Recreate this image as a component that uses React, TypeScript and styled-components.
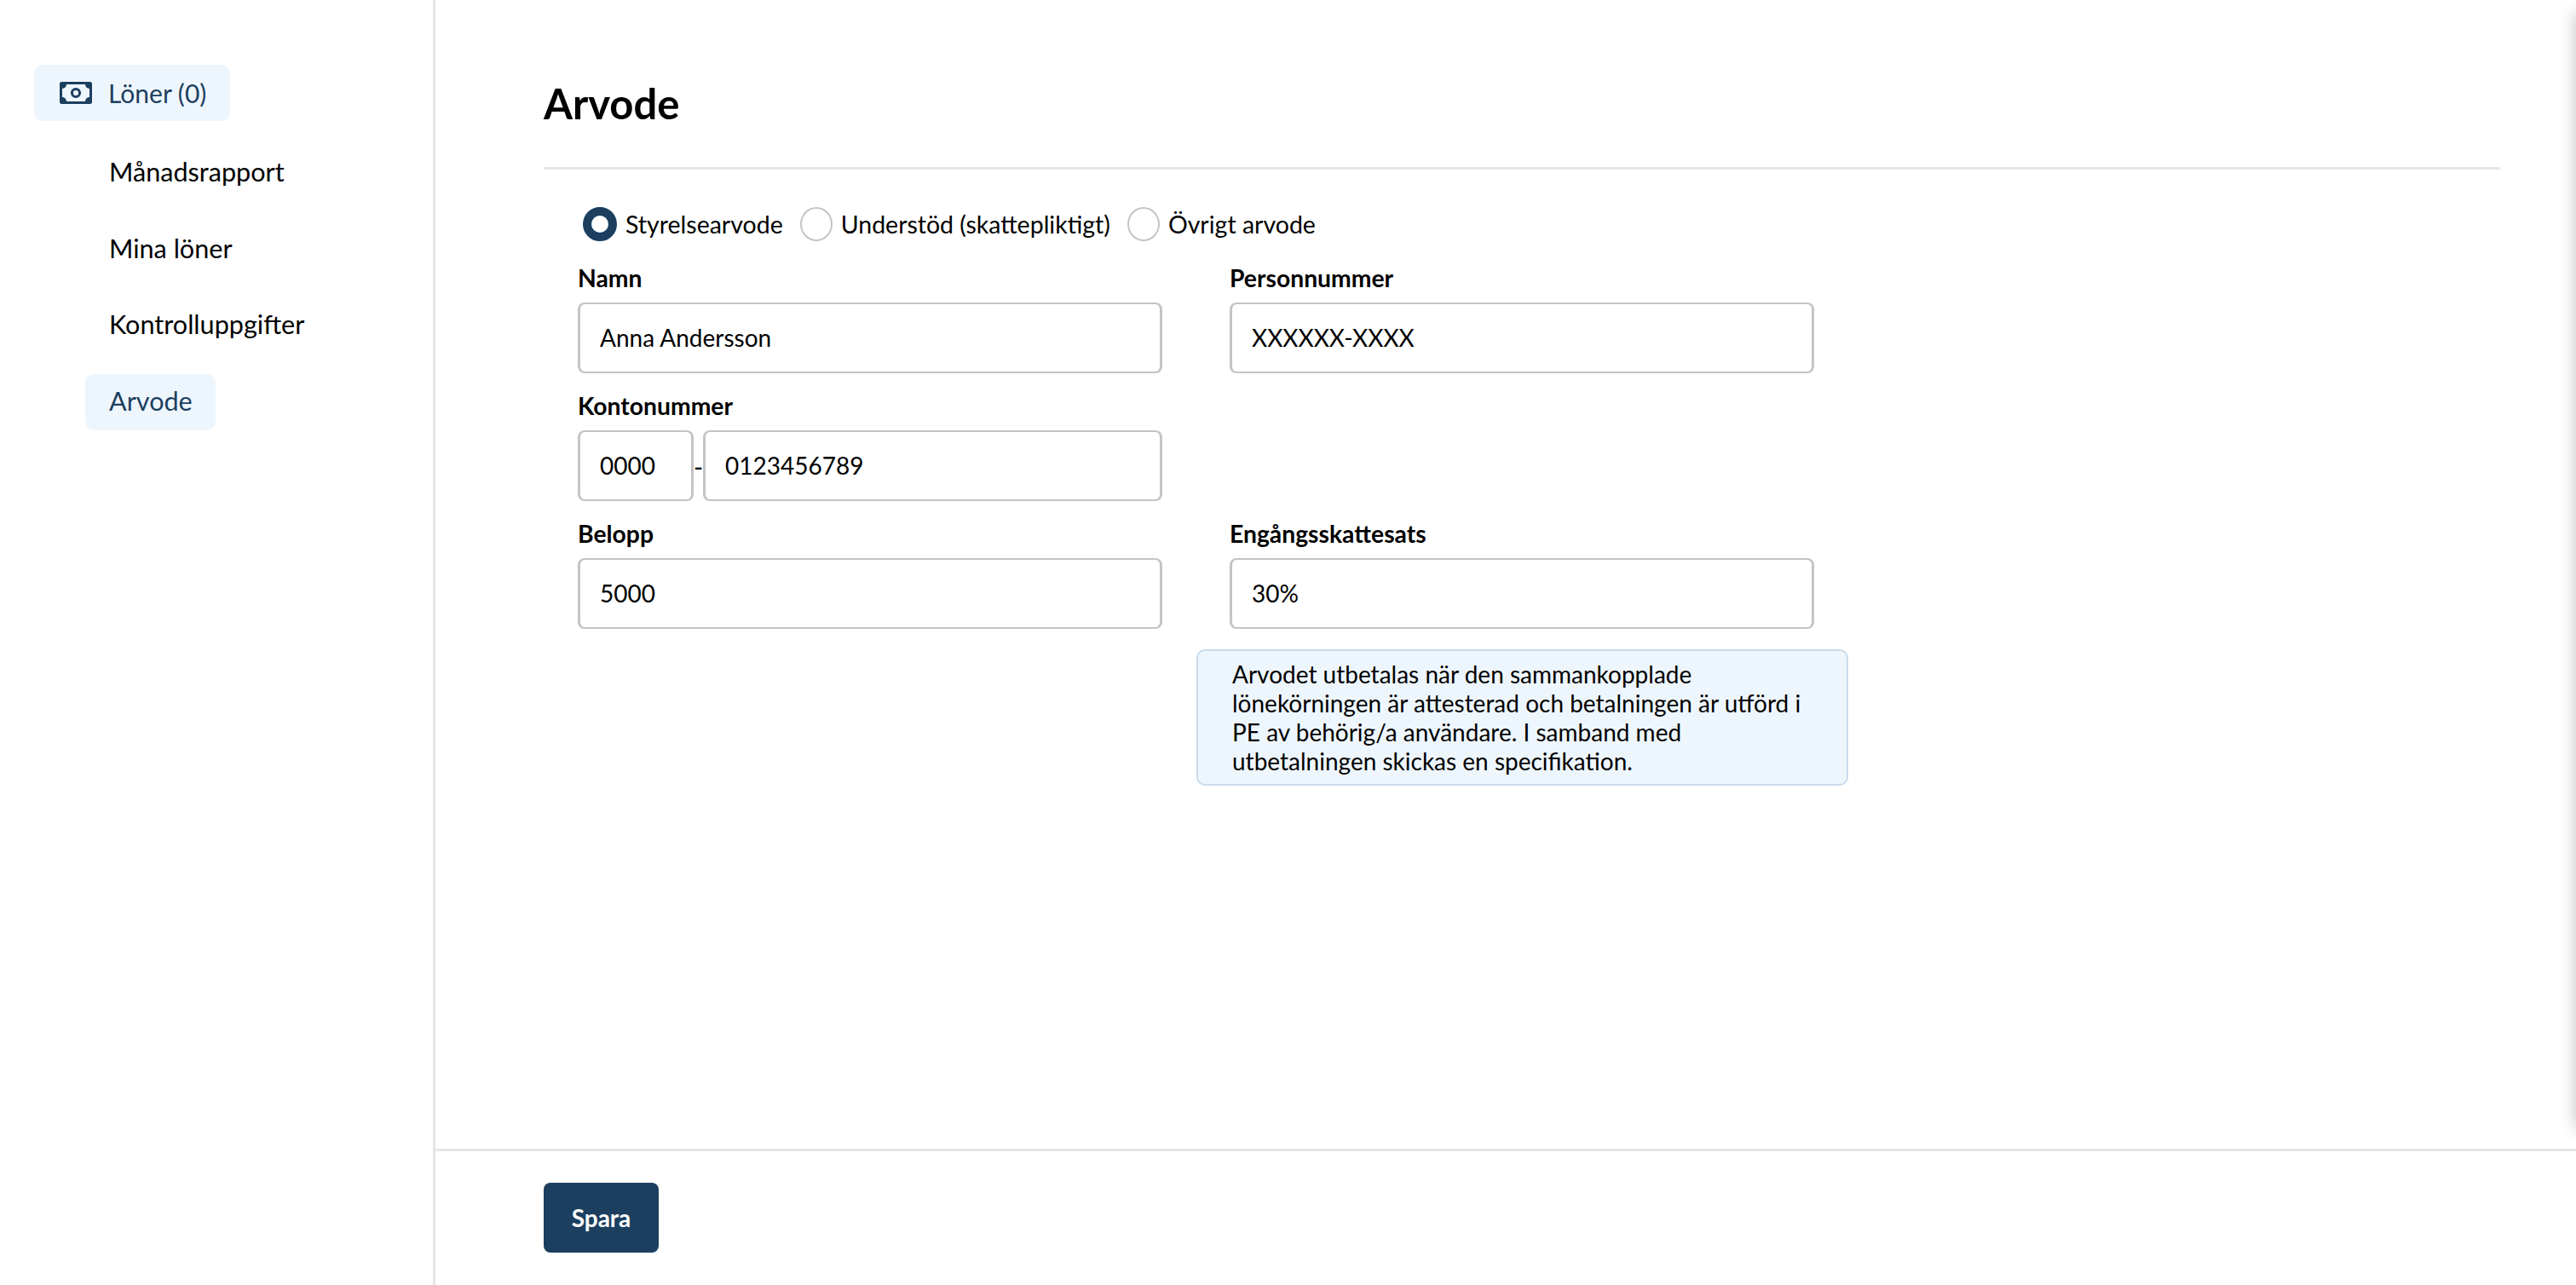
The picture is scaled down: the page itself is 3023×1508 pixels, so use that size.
import React from 'react';
import styled, { createGlobalStyle } from 'styled-components';

const GlobalStyle = createGlobalStyle`
  html, body, #root {
    margin: 0;
    height: 100%;
  }
  body {
    background: #fff;
    color: #000;
    font-family: Lato, "Open Sans", sans-serif;
    overflow: hidden;
  }
  * {
    box-sizing: border-box;
  }
`;

const navItems = [
  { label: 'Månadsrapport', active: false },
  { label: 'Mina löner', active: false },
  { label: 'Kontrolluppgifter', active: false },
  { label: 'Arvode', active: true },
];

const radios = [
  { label: 'Styrelsearvode', checked: true },
  { label: 'Understöd (skattepliktigt)', checked: false },
  { label: 'Övrigt arvode', checked: false },
];

const MoneyIcon = () => (
  <svg width="38" height="26" viewBox="0 0 38 26" fill="none">
    <rect x="1.5" y="1.5" width="35" height="23" rx="1" stroke="#1c3f60" strokeWidth="3" />
    <circle cx="19" cy="13" r="4.6" stroke="#1c3f60" strokeWidth="3" />
    <path d="M3 3h5a5 5 0 0 1-5 5z" fill="#1c3f60" />
    <path d="M35 3h-5a5 5 0 0 0 5 5z" fill="#1c3f60" />
    <path d="M3 23h5a5 5 0 0 0-5-5z" fill="#1c3f60" />
    <path d="M35 23h-5a5 5 0 0 1 5-5z" fill="#1c3f60" />
  </svg>
);

const App: React.FC = () => {
  return (
    <Page>
      <GlobalStyle />
      <Sidebar>
        <TopLink>
          <MoneyIcon />
          Löner (0)
        </TopLink>
        <SubNav>
          {navItems.map((item) => (
            <SubLink key={item.label} $active={item.active}>
              {item.label}
            </SubLink>
          ))}
        </SubNav>
      </Sidebar>

      <Main>
        <Content>
          <Title>Arvode</Title>
          <RadioRow>
            {radios.map((radio) => (
              <RadioLabel key={radio.label}>
                <RadioMark $checked={radio.checked} />
                {radio.label}
              </RadioLabel>
            ))}
          </RadioRow>
          <FormRow>
            <Field>
              <Label>Namn</Label>
              <Input readOnly value="Anna Andersson" />
            </Field>
            <Field>
              <Label>Personnummer</Label>
              <Input readOnly value="XXXXXX-XXXX" />
            </Field>
          </FormRow>
          <FormRow>
            <Field>
              <Label>Kontonummer</Label>
              <AccountInputs>
                <ClearingInput readOnly value="0000" />
                <Dash>-</Dash>
                <Input readOnly value="0123456789" />
              </AccountInputs>
            </Field>
          </FormRow>
          <FormRow>
            <Field>
              <Label>Belopp</Label>
              <Input readOnly value="5000" />
            </Field>
            <Field>
              <Label>Engångsskattesats</Label>
              <Input readOnly value="30%" />
              <InfoBox>
                Arvodet utbetalas när den sammankopplade lönekörningen är attesterad och
                betalningen är utförd i PE av behörig/a användare. I samband med
                utbetalningen skickas en specifikation.
              </InfoBox>
            </Field>
          </FormRow>
        </Content>
        <Footer>
          <SaveButton>Spara</SaveButton>
        </Footer>
      </Main>
      <EdgeShadow />
    </Page>
  );
};

const Page = styled.div`
  display: flex;
  height: 1508px;
  position: relative;
  overflow: hidden;
`;

const Sidebar = styled.aside`
  width: 511px;
  flex-shrink: 0;
  border-right: 3px solid #e6e6e6;
  padding: 76px 0 0 40px;
  font-size: 30px;
`;

const TopLink = styled.a`
  display: inline-flex;
  align-items: center;
  gap: 19px;
  height: 66px;
  padding: 0 28px 0 30px;
  border-radius: 10px;
  background: #eef6fd;
  color: #1c3f60;
`;

const SubNav = styled.nav`
  display: flex;
  flex-direction: column;
  align-items: flex-start;
  gap: 23.5px;
  margin-top: 28px;
  padding-left: 60px;
  font-size: 30.6px;
`;

const SubLink = styled.a<{ $active: boolean }>`
  display: flex;
  align-items: center;
  height: 66px;
  padding: 0 27px 3px 28px;
  border-radius: 10px;
  background: ${(p) => (p.$active ? '#eef6fd' : 'transparent')};
  color: ${(p) => (p.$active ? '#1c3f60' : '#000')};
`;

const Main = styled.main`
  flex: 1;
  display: flex;
  flex-direction: column;
  min-width: 0;
`;

const Content = styled.div`
  flex: 1;
  padding: 0 89px 0 127px;
`;

const Title = styled.h1`
  margin: 0;
  height: 199px;
  padding-top: 88px;
  border-bottom: 3px solid #e6e6e6;
  font-size: 49px;
  line-height: 66px;
  font-weight: 700;
`;

const RadioRow = styled.div`
  display: flex;
  gap: 20px;
  margin-top: 44px;
  padding-left: 46px;
`;

const RadioLabel = styled.label`
  display: flex;
  align-items: center;
  gap: 10px;
  height: 40px;
  font-size: 28.5px;
`;

const RadioMark = styled.span<{ $checked: boolean }>`
  width: ${(p) => (p.$checked ? '40px' : '38px')};
  height: 40px;
  border-radius: 50%;
  background: #fff;
  border: ${(p) => (p.$checked ? '10px solid #1c3f60' : '2px solid #c4c4c4')};
`;

const FormRow = styled.div`
  display: flex;
  gap: 79.5px;
  padding-left: 40px;
`;

const Field = styled.div`
  width: 685.5px;
  height: 150px;
  position: relative;
`;

const Label = styled.div`
  height: 72px;
  padding-top: 25.5px;
  font-size: 28.3px;
  line-height: 34px;
  font-weight: 700;
`;

const Input = styled.input`
  width: 100%;
  height: 83px;
  padding: 0 23px 2px;
  border-style: solid;
  border-color: #c4c4c4;
  border-width: 2px 3px;
  border-radius: 8px;
  background: #fff;
  color: #000;
  font-family: inherit;
  font-size: 28px;
  outline: none;
`;

const AccountInputs = styled.div`
  display: flex;
  align-items: center;
`;

const ClearingInput = styled(Input)`
  width: 136px;
  flex-shrink: 0;
`;

const Dash = styled.span`
  width: 11px;
  flex-shrink: 0;
  font-size: 30px;
  text-align: center;
`;

const InfoBox = styled.div`
  position: absolute;
  top: 179px;
  left: -39px;
  width: 765px;
  height: 160px;
  padding: 10px 39px 10px 40px;
  border: 2px solid #c9dcec;
  border-radius: 10px;
  background: #eef6fd;
  font-size: 28px;
  line-height: 34px;
`;

const Footer = styled.footer`
  height: 160px;
  padding: 37px 0 0 127px;
  border-top: 3px solid #e6e6e6;
`;

const SaveButton = styled.button`
  width: 135px;
  height: 82px;
  border: none;
  border-radius: 8px;
  background: #1c3f60;
  color: #fff;
  font-family: inherit;
  font-size: 28px;
  font-weight: 700;
`;

const EdgeShadow = styled.div`
  position: absolute;
  top: 14px;
  right: -30px;
  width: 30px;
  height: 1310px;
  box-shadow: 0 0 20px rgba(0, 0, 0, 0.25);
`;

export default App;
